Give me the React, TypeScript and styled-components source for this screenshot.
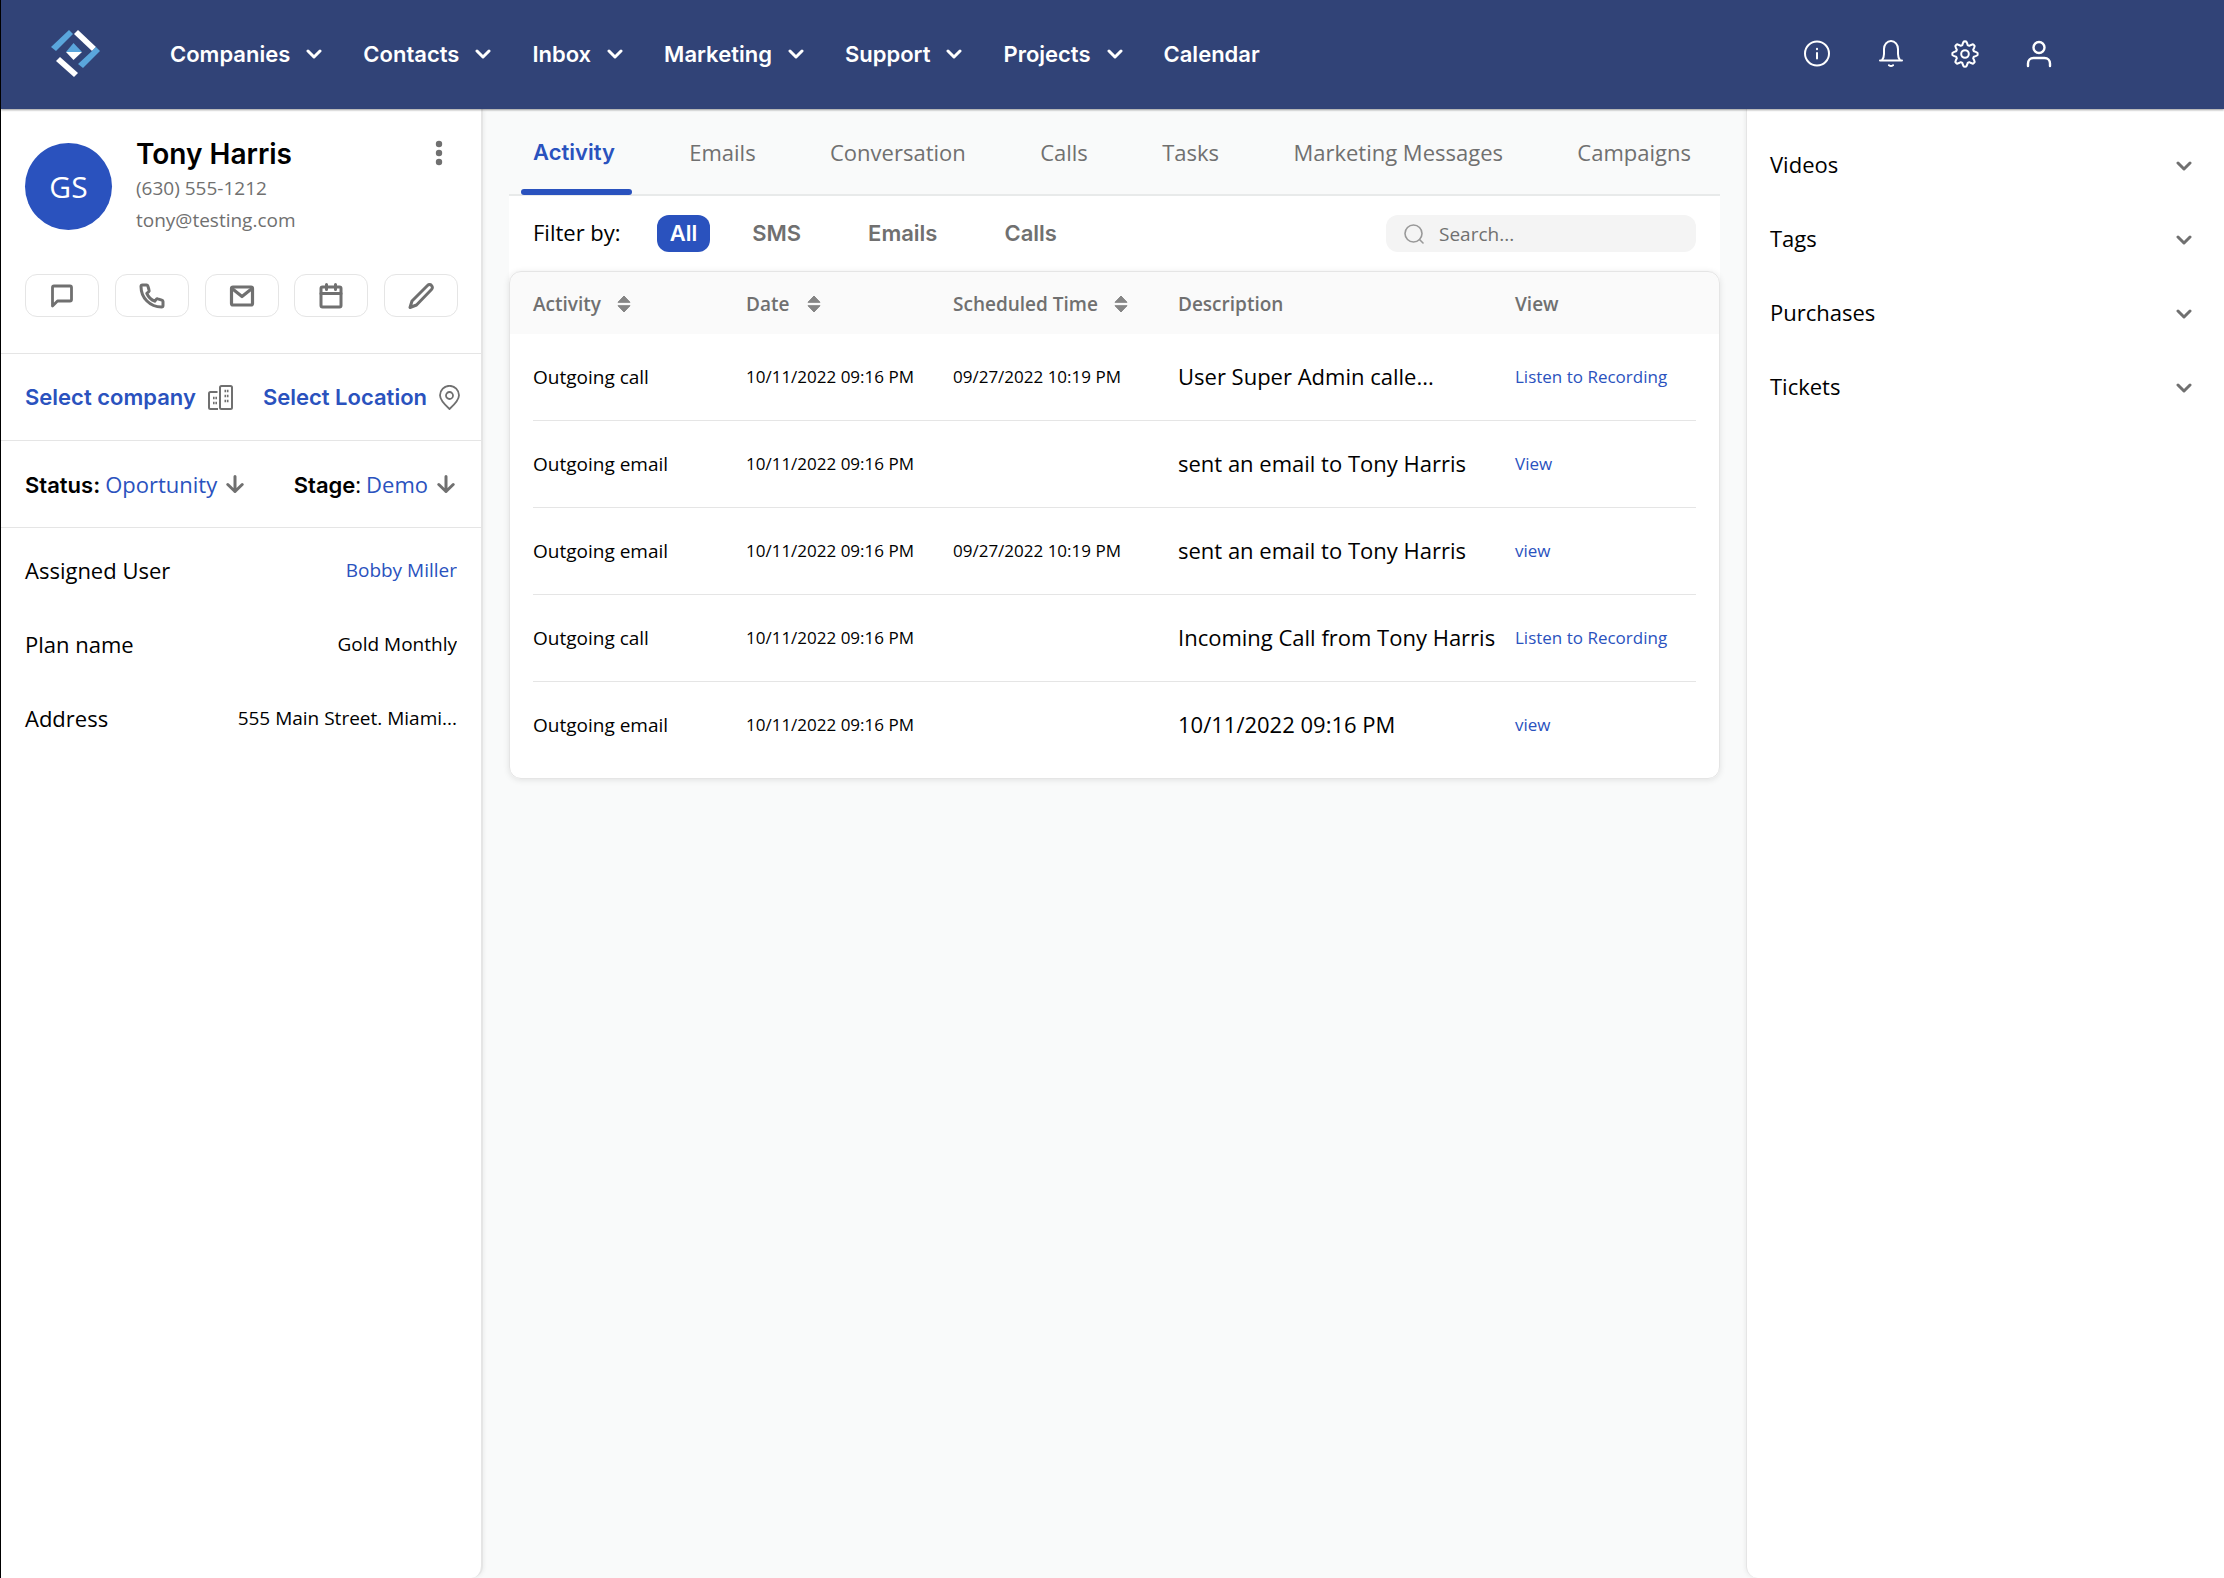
import React from "react";
import styled, { createGlobalStyle } from "styled-components";

const inter = `Inter, "Liberation Sans", sans-serif`;
const openSans = `"Open Sans", "Noto Sans", sans-serif`;
const blue = "#2a52be";
const grey = "#707070";
const line = "#e5e5e5";

const GlobalStyle = createGlobalStyle`
  *, *::before, *::after { box-sizing: border-box; }
  body { margin: 0; background: #f9fafa; color: #000; font: 22px/30px ${openSans}; }
  button, input { font: inherit; color: inherit; }
  button { background: none; border: 0; padding: 0; cursor: pointer; }
  a { color: inherit; text-decoration: none; }
  ul, dl, dd, p, h1 { margin: 0; padding: 0; list-style: none; }
  svg { display: block; flex: none; }
`;

const Page = styled.div`
  min-height: 100vh;
  display: flex;
  flex-direction: column;
  border-left: 1px solid #000;
`;

const Header = styled.header`
  position: relative;
  height: 109px;
  flex: none;
  display: flex;
  align-items: center;
  padding: 0 171px 2px 50px;
  background: #314377;
  color: #fff;
  box-shadow: 0 1px 2px rgba(0, 0, 0, 0.4);
`;

const Nav = styled.nav`
  display: flex;
  gap: 41px;
  margin-left: 69px;
  font: 600 22px/30px ${inter};
`;

const NavButton = styled.button`
  display: flex;
  align-items: center;
  gap: 16px;
`;

const HeaderTools = styled.div`
  display: flex;
  gap: 46px;
  margin-left: auto;
`;

const Body = styled.div`
  flex: 1;
  display: grid;
  grid-template-columns: 482px minmax(0, 1fr) 478px;
`;

const Sidebar = styled.aside`
  background: #fff;
  border-right: 2px solid ${line};
  border-radius: 0 0 12px 0;
  box-shadow: 1px 0 4px rgba(0, 0, 0, 0.06);
`;

const Profile = styled.section`
  display: flex;
  align-items: flex-start;
  padding: 27px 38px 0 24px;
`;

const Avatar = styled.div`
  width: 87px;
  height: 87px;
  flex: none;
  display: grid;
  place-items: center;
  margin-top: 7px;
  border-radius: 50%;
  background: ${blue};
  color: #fff;
  font-size: 30px;
`;

const Identity = styled.div`
  flex: 1;
  margin-left: 24px;
  color: ${grey};
  font-size: 19px;
  line-height: 32px;
`;

const Name = styled.h1`
  color: #000;
  font: 600 28px/36px ${inter};
`;

const MoreButton = styled.button`
  margin-top: 4px;
`;

const Actions = styled.div`
  display: flex;
  justify-content: space-between;
  padding: 38px 23px 36px 24px;
`;

const ActionButton = styled.button`
  width: 74px;
  height: 43px;
  display: grid;
  place-items: center;
  border: 1px solid ${line};
  border-radius: 12px;
  color: ${grey};
`;

const Strip = styled.div<{ $right: number }>`
  height: 87px;
  display: flex;
  align-items: center;
  justify-content: space-between;
  padding: 0 ${(p) => p.$right}px 0 24px;
  border-top: 1px solid ${line};
`;

const PickButton = styled.button`
  display: flex;
  align-items: center;
  gap: 12px;
  color: ${blue};
  font: 600 22px/30px ${inter};
  svg { color: ${grey}; }
`;

const StageButton = styled.button`
  display: flex;
  align-items: center;
  gap: 9px;
  color: ${blue};
  svg { color: ${grey}; }
`;

const StageLabel = styled.span`
  margin-right: 5px;
  color: #000;
  b { font: 600 22px/30px ${inter}; }
`;

const Facts = styled.dl`
  border-top: 1px solid ${line};
  padding: 5px 24px 0 24px;
`;

const Fact = styled.div`
  height: 74px;
  display: flex;
  align-items: center;
  justify-content: space-between;
`;

const FactValue = styled.dd<{ $link?: boolean }>`
  max-width: 240px;
  overflow: hidden;
  text-overflow: ellipsis;
  white-space: nowrap;
  font-size: 19px;
  color: ${(p) => (p.$link ? blue : "#000")};
`;

const Main = styled.main`
  padding: 0 26px;
`;

const Tabs = styled.ul`
  height: 87px;
  display: flex;
  justify-content: space-between;
  padding: 0 12px;
  border-bottom: 2px solid #e8eaea;
`;

const Tab = styled.button<{ $active?: boolean }>`
  position: relative;
  height: 86px;
  padding: 0 17px 1px 12px;
  color: ${(p) => (p.$active ? blue : grey)};
  font-family: ${(p) => (p.$active ? inter : openSans)};
  font-weight: ${(p) => (p.$active ? 600 : 400)};

  &::after {
    content: "";
    position: absolute;
    inset: auto 0 0 0;
    height: 6px;
    border-radius: 3px;
    background: ${(p) => (p.$active ? blue : "transparent")};
  }
`;

const FilterBar = styled.div`
  height: 75px;
  display: flex;
  align-items: center;
  padding: 0 24px;
  background: #fff;
`;

const FilterList = styled.div`
  display: flex;
  gap: 41px;
  margin-left: 29px;
`;

const FilterButton = styled.button<{ $active?: boolean }>`
  height: 37px;
  padding: 0 13px 1px;
  border-radius: 12px;
  font-family: ${inter};
  font-weight: 600;
  color: ${(p) => (p.$active ? "#fff" : grey)};
  background: ${(p) => (p.$active ? blue : "transparent")};
`;

const FilterLabel = styled.span`
  margin-right: 36px;
  padding-bottom: 3px;
`;

const SearchBox = styled.label`
  width: 310px;
  height: 37px;
  display: flex;
  align-items: center;
  gap: 15px;
  margin-left: auto;
  padding: 0 18px;
  border-radius: 12px;
  background: #f4f4f4;
  color: #999;
`;

const SearchInput = styled.input`
  min-width: 0;
  flex: 1;
  border: 0;
  padding: 0;
  outline: 0;
  background: none;
  color: #000;
  font-size: 19px;
  &::placeholder { color: ${grey}; opacity: 1; }
`;

const FilterBacking = styled.div`
  background: linear-gradient(#fff 24px, transparent 24px);
`;

const TableCard = styled.div`
  overflow: hidden;
  padding-bottom: 9px;
  border: 1px solid ${line};
  border-radius: 12px;
  background: linear-gradient(#fafafa 62px, #fff 62px);
  box-shadow: 0 1px 6px rgba(0, 0, 0, 0.1);
`;

const Table = styled.table`
  width: 100%;
  table-layout: fixed;
  border-collapse: separate;
  border-spacing: 0;
  padding: 0 23px;
  th, td { padding: 0; text-align: left; white-space: nowrap; }
  th { height: 62px; padding-top: 2px; color: ${grey}; font-size: 19px; font-weight: 600; }
  td { height: 87px; border-bottom: 1px solid ${line}; }
  tr:last-child td { border-bottom-color: transparent; }
`;

const Column = styled.col<{ $width?: number }>`
  width: ${(p) => (p.$width ? `${p.$width}px` : "auto")};
`;

const SortButton = styled.button<{ $gap: number }>`
  display: flex;
  align-items: center;
  gap: ${(p) => p.$gap}px;
`;

const ActivityCell = styled.td`
  font-size: 19px;
`;

const DateCell = styled.td`
  font-size: 17px;
`;

const DescriptionCell = styled.td`
  && { padding-bottom: 2px; }
`;

const ViewCell = styled.td`
  && { padding-bottom: 3px; }
`;

const ViewLink = styled.a`
  color: ${blue};
  font-size: 17px;
`;

const Panel = styled.aside`
  padding: 18px 32px 0 23px;
  border-left: 1px solid ${line};
  border-radius: 0 0 0 12px;
  background: #fff;
  box-shadow: -1px 0 4px rgba(0, 0, 0, 0.06);
`;

const PanelButton = styled.button`
  width: 100%;
  height: 74px;
  display: flex;
  align-items: center;
  justify-content: space-between;
  svg { margin-top: 3px; color: ${grey}; }
`;

const Logo = () => (
  <svg width="50" height="48" viewBox="0 0 50 48" role="img" aria-label="Home">
    <path d="M18 0 22 4 5 21 0 17Z" fill="#5aa6dc" />
    <path d="M27 0 45 17 41 21 23 4Z" fill="#fff" />
    <path d="M45 17 49 21 32 38 27 34 41 21Z" fill="#5aa6dc" />
    <path d="M9 27 27 43 23 47 5 31Z" fill="#fff" />
    <path d="M22.500 13 31 22H15Z" fill="#5aa6dc" />
    <path d="M15 22H31L22.500 30Z" fill="#fff" />
  </svg>
);

const Chevron = ({ width = 3 }: { width?: number }) => (
  <svg width="16" height="10" viewBox="0 0 16 10" fill="none" stroke="currentColor" strokeWidth={width} strokeLinecap="round" strokeLinejoin="round">
    <path d="M2 2 8 8 14 2" />
  </svg>
);

const Icon = ({ size = 28, width = 2, children }: { size?: number; width?: number; children: React.ReactNode }) => (
  <svg width={size} height={size} viewBox="0 0 28 28" fill="none" stroke="currentColor" strokeWidth={width} strokeLinecap="round" strokeLinejoin="round">
    {children}
  </svg>
);

const InfoIcon = () => (
  <Icon>
    <circle cx="14" cy="13.500" r="12" />
    <path d="M14 13v5.500M14 8.800v.4" />
  </Icon>
);

const BellIcon = () => (
  <Icon>
    <path d="M3 20.500h22M5 20c1.600-2 2-3.500 2-6V9c0-4.500 3-8 7-8s7 3.500 7 8v5c0 2.500.4 4 2 6" />
    <path d="M12 25.200c1.200 1 2.800 1 4 0" />
  </Icon>
);

const gearPath = Array.from({ length: 64 }, (_, i) => {
  const angle = (i / 64) * Math.PI * 2;
  const wave = Math.cos(angle * 8);
  const radius = 10.9 + 1.8 * Math.tanh(wave * 2.2);
  return `${i ? "L" : "M"}${(14 + radius * Math.sin(angle)).toFixed(2)} ${(14 - radius * Math.cos(angle)).toFixed(2)}`;
}).join("") + "Z";

const GearIcon = () => (
  <Icon>
    <path d={gearPath} />
    <circle cx="14" cy="14" r="3.800" />
  </Icon>
);

const UserIcon = () => (
  <Icon width={2.4}>
    <circle cx="14" cy="7.500" r="5.500" />
    <path d="M3 26v-2.500c0-3.300 2.200-5.500 5.500-5.500h11c3.300 0 5.500 2.200 5.500 5.500V26" />
  </Icon>
);

const ChatIcon = () => (
  <Icon width={2.8}>
    <path d="M4.500 24V5.500c0-.8.7-1.500 1.500-1.500h16c.8 0 1.500.7 1.500 1.500v12c0 .8-.7 1.500-1.500 1.500H9.500Z" />
  </Icon>
);

const PhoneIcon = () => (
  <Icon width={3}>
    <path d="M3 4.500c0-1 .8-1.500 1.500-1.500h4c.7 0 1.200.5 1.400 1.200l1.200 4c.2.6 0 1.200-.5 1.600L8.800 11.300c1.500 3.500 4.400 6.400 7.900 7.900l1.500-1.800c.4-.5 1-.7 1.600-.5l4 1.200c.7.200 1.200.7 1.200 1.400v4c0 .8-.6 1.500-1.500 1.500C12 25 3 16 3 4.500Z" />
  </Icon>
);

const MailIcon = () => (
  <Icon width={3.2}>
    <rect x="3.500" y="5" width="21" height="18" rx="1.500" />
    <path d="M4 6.500 14 14.500 24 6.500" />
  </Icon>
);

const CalendarIcon = () => (
  <Icon width={3}>
    <rect x="4" y="5" width="20" height="20" rx="1.500" />
    <path d="M4 11.500h20M9.500 2.500v5M18.500 2.500v5" />
  </Icon>
);

const PencilIcon = () => (
  <Icon width={3}>
    <path d="M3 25.500 5 19 20.500 3.500c1.200-1.200 3-1.200 4 0 1.200 1.200 1.200 2.800 0 4L9.500 23Z" />
  </Icon>
);

const BuildingsIcon = () => (
  <svg width="25" height="25" viewBox="0 0 25 25" fill="none" stroke="currentColor" strokeWidth="2" strokeLinejoin="round">
    <rect x="12" y="1" width="12" height="23" rx="1.500" />
    <path d="M9.500 7H2.500C1.700 7 1 7.700 1 8.500v14c0 .8.700 1.500 1.500 1.500H10" />
    <path d="M5 13h4M5 18h4M16.500 6h4M16.500 11h4M16.500 16h4" strokeWidth="2.400" strokeDasharray="1.600 .8" />
  </svg>
);

const PinIcon = () => (
  <svg width="21" height="25" viewBox="0 0 21 25" fill="none" stroke="currentColor" strokeWidth="1.800" strokeLinejoin="round">
    <path d="M10.500 24C6 20 1 15.500 1 10.300A9.500 9.500 0 0 1 20 10.300C20 15.500 15 20 10.500 24Z" />
    <circle cx="10.500" cy="10.500" r="3.500" />
  </svg>
);

const DownArrow = () => (
  <svg width="18" height="18" viewBox="0 0 18 18" fill="none" stroke="currentColor" strokeWidth="3" strokeLinecap="round" strokeLinejoin="round">
    <path d="M9 1.500v15M1.800 9.500 9 16.500l7.200-7" />
  </svg>
);

const MoreIcon = () => (
  <svg width="8" height="26" viewBox="0 0 8 26" fill={grey}>
    <circle cx="4" cy="4" r="3.200" />
    <circle cx="4" cy="13" r="3.200" />
    <circle cx="4" cy="22" r="3.200" />
  </svg>
);

const SearchIcon = () => (
  <svg width="20" height="20" viewBox="0 0 20 20" fill="none" stroke="currentColor" strokeWidth="1.600" strokeLinecap="round">
    <circle cx="9.500" cy="9.500" r="8.500" />
    <path d="m15.500 15.500 3.500 3.500" />
  </svg>
);

const SortIcon = () => (
  <svg width="14" height="18" viewBox="0 0 14 18" fill="#858585" stroke="#858585" strokeLinejoin="round">
    <path d="M7 1 13 7.300H1Z" />
    <path d="M1 10.700H13L7 17Z" />
  </svg>
);

const navItems = ["Companies", "Contacts", "Inbox", "Marketing", "Support", "Projects"];
const tabs = ["Activity", "Emails", "Conversation", "Calls", "Tasks", "Marketing Messages", "Campaigns"];
const actions = [
  { label: "Message", icon: <ChatIcon /> },
  { label: "Call", icon: <PhoneIcon /> },
  { label: "Email", icon: <MailIcon /> },
  { label: "Schedule", icon: <CalendarIcon /> },
  { label: "Edit", icon: <PencilIcon /> },
];
const rows = [
  ["Outgoing call", "10/11/2022 09:16 PM", "09/27/2022 10:19 PM", "User Super Admin calle...", "Listen to Recording"],
  ["Outgoing email", "10/11/2022 09:16 PM", "", "sent an email to Tony Harris", "View"],
  ["Outgoing email", "10/11/2022 09:16 PM", "09/27/2022 10:19 PM", "sent an email to Tony Harris", "view"],
  ["Outgoing call", "10/11/2022 09:16 PM", "", "Incoming Call from Tony Harris", "Listen to Recording"],
  ["Outgoing email", "10/11/2022 09:16 PM", "", "10/11/2022 09:16 PM", "view"],
];

export default function App() {
  return (
    <Page>
      <GlobalStyle />
      <Header>
        <Logo />
        <Nav>
          {navItems.map((item) => (
            <NavButton key={item}>
              {item}
              <Chevron />
            </NavButton>
          ))}
          <a href="#calendar">Calendar</a>
        </Nav>
        <HeaderTools>
          <button aria-label="Information"><InfoIcon /></button>
          <button aria-label="Notifications"><BellIcon /></button>
          <button aria-label="Settings"><GearIcon /></button>
          <button aria-label="Account"><UserIcon /></button>
        </HeaderTools>
      </Header>
      <Body>
        <Sidebar>
          <Profile>
            <Avatar>GS</Avatar>
            <Identity>
              <Name>Tony Harris</Name>
              <p>(630) 555-1212</p>
              <p>tony@testing.com</p>
            </Identity>
            <MoreButton aria-label="More"><MoreIcon /></MoreButton>
          </Profile>
          <Actions>
            {actions.map((a) => (
              <ActionButton key={a.label} aria-label={a.label}>{a.icon}</ActionButton>
            ))}
          </Actions>
          <Strip $right={21}>
            <PickButton>Select company <BuildingsIcon /></PickButton>
            <PickButton>Select Location <PinIcon /></PickButton>
          </Strip>
          <Strip $right={26}>
            <StageButton>
              <span><StageLabel><b>Status:</b></StageLabel>Oportunity</span>
              <DownArrow />
            </StageButton>
            <StageButton>
              <span><StageLabel><b>Stage</b>:</StageLabel>Demo</span>
              <DownArrow />
            </StageButton>
          </Strip>
          <Facts>
            <Fact><dt>Assigned User</dt><FactValue $link>Bobby Miller</FactValue></Fact>
            <Fact><dt>Plan name</dt><FactValue>Gold Monthly</FactValue></Fact>
            <Fact><dt>Address</dt><FactValue>555 Main Street. Miami...</FactValue></Fact>
          </Facts>
        </Sidebar>
        <Main>
          <Tabs>
            {tabs.map((tab, i) => (
              <li key={tab}><Tab $active={i === 0}>{tab}</Tab></li>
            ))}
          </Tabs>
          <FilterBar>
            <FilterLabel>Filter by:</FilterLabel>
            <FilterButton $active>All</FilterButton>
            <FilterList>
              <FilterButton>SMS</FilterButton>
              <FilterButton>Emails</FilterButton>
              <FilterButton>Calls</FilterButton>
            </FilterList>
            <SearchBox>
              <SearchIcon />
              <SearchInput type="search" aria-label="Search" placeholder="Search..." />
            </SearchBox>
          </FilterBar>
          <FilterBacking>
            <TableCard>
              <Table>
                <colgroup>
                  <Column $width={213} />
                  <Column $width={207} />
                  <Column $width={225} />
                  <Column />
                  <Column $width={181} />
                </colgroup>
                <thead>
                  <tr>
                    <th><SortButton $gap={16}>Activity <SortIcon /></SortButton></th>
                    <th><SortButton $gap={18}>Date <SortIcon /></SortButton></th>
                    <th><SortButton $gap={16}>Scheduled Time <SortIcon /></SortButton></th>
                    <th>Description</th>
                    <th>View</th>
                  </tr>
                </thead>
                <tbody>
                  {rows.map(([activity, date, scheduled, description, view], i) => (
                    <tr key={i}>
                      <ActivityCell>{activity}</ActivityCell>
                      <DateCell>{date}</DateCell>
                      <DateCell>{scheduled}</DateCell>
                      <DescriptionCell>{description}</DescriptionCell>
                      <ViewCell><ViewLink href={`#activity-${i + 1}`}>{view}</ViewLink></ViewCell>
                    </tr>
                  ))}
                </tbody>
              </Table>
            </TableCard>
          </FilterBacking>
        </Main>
        <Panel>
          {["Videos", "Tags", "Purchases", "Tickets"].map((title) => (
            <PanelButton key={title} aria-expanded="false">{title}<Chevron /></PanelButton>
          ))}
        </Panel>
      </Body>
    </Page>
  );
}
